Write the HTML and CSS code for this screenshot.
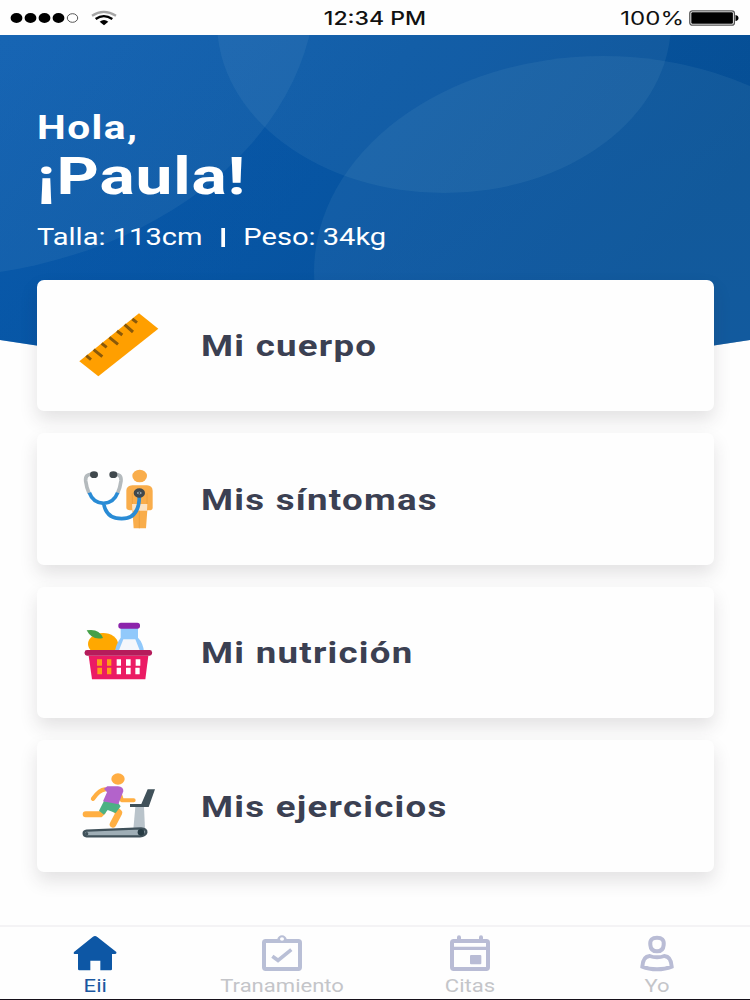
FILE: index.html
```html
<!DOCTYPE html>
<html lang="es">
<head>
<meta charset="utf-8">
<title>Inicio</title>
<link rel="stylesheet" href="styles.css">
</head>
<body>
<div class="screen">
  <header class="status">
    <div class="signal">
      <svg class="dots" viewBox="0 0 70 12"><g fill="#000"><ellipse cx="6.500" cy="6" rx="5.900" ry="4.900"/><ellipse cx="20.500" cy="6" rx="5.900" ry="4.900"/><ellipse cx="34.500" cy="6" rx="5.900" ry="4.900"/><ellipse cx="48.500" cy="6" rx="5.900" ry="4.900"/></g><ellipse cx="62.500" cy="6" rx="5.200" ry="4.300" fill="#fff" stroke="#444" stroke-width=".9"/></svg>
      <svg class="wifi" viewBox="0 0 76 48"><path d="M2 17Q37-6 74 17" fill="none" stroke="#a5a5a5" stroke-width="7"/><path d="M13 27Q37 10 63 27" fill="none" stroke="#000" stroke-width="7"/><path d="M25 35Q38 25 51 35L38 46Z"/></svg>
    </div>
    <span class="clock">12:34 PM</span>
    <div class="power">
      <span class="percent">100%</span>
      <svg class="battery" viewBox="0 0 50 16"><rect x=".8" y=".8" width="44.6" height="14.400" rx="2.5" fill="#fff" stroke="#555" stroke-width="1.3"/><rect x="2.3" y="2.2" width="41.6" height="11.600" rx="1.2"/><path d="M46.5 5Q49.5 5.500 49.500 8T46.500 11Z"/></svg>
    </div>
  </header>

  <section class="hero">
    <svg class="hero-bg" viewBox="0 35 750 340">
      <defs>
        <linearGradient id="sky" x1="0" y1="0" x2="1" y2=".35"><stop offset="0" stop-color="#0b5cb0"/><stop offset=".5" stop-color="#0755a3"/><stop offset="1" stop-color="#064e93"/></linearGradient>
        <linearGradient id="tone" x1="0" y1="0" x2="0" y2="1"><stop offset="0" stop-color="#0753a0" stop-opacity="0"/><stop offset="1" stop-color="#0655a4" stop-opacity=".4"/></linearGradient>
        <clipPath id="edge"><path d="M0 35H750V340Q375 402 0 340Z"/></clipPath>
      </defs>
      <g clip-path="url(#edge)">
        <rect y="35" width="750" height="340" fill="url(#sky)"/>
        <rect y="35" width="750" height="340" fill="url(#tone)"/>
        <g fill="#b4d2e1" fill-opacity=".075">
          <ellipse cx="-79" cy="-18.700" rx="395" ry="296.600"/>
          <ellipse cx="444" cy="22.500" rx="227" ry="170.500"/>
          <ellipse cx="603" cy="272" rx="289" ry="216"/>
        </g>
      </g>
    </svg>
    <div class="greeting">
      <p class="hello">Hola,</p>
      <h1 class="name">¡Paula!</h1>
      <p class="facts"><span>Talla: 113cm</span><i class="bar"></i><span>Peso: 34kg</span></p>
    </div>
  </section>

  <main class="cards">
    <article class="card">
      <svg class="icon" viewBox="0 0 300 270"><path d="M28 184L207 40 265 86 85 229Z" fill="#ff9f00"/><g stroke="#8a5909" stroke-width="9"><path d="M49 167l14 12M71 149l26 21M95 130l15 12M118 112l26 21M141 93l16 12M164 74l25 22M187 57l14 11"/></g></svg>
      <h2>Mi cuerpo</h2>
    </article>
    <article class="card">
      <svg class="icon" viewBox="0 -4 300 270"><g fill="#f9ad4b"><ellipse cx="209" cy="62" rx="22" ry="19"/><path d="M187 90H231Q247 91 248 106V158Q248 165 236 165H232L228 219H191L187 165H180Q169 164 169 157V105Q170 91 187 90Z"/></g><path d="M186 146H232L231 166H187Z" fill="#fbe3c4"/><path d="M187 114V146M231 114V146" stroke="#e99a36" stroke-width="2"/><path d="M208 166V219" stroke="#e99a36" stroke-width="2"/><g fill="none" stroke-width="11"><path d="M68 57Q45 55 47 77Q50 99 57 113M132 57Q155 55 153 77Q150 99 143 113" stroke="#b4babd"/><path d="M58 112Q69 143 101 144Q132 142 143 112M101 144Q108 190 155 190Q208 190 208 122" stroke="#298bd5"/></g><ellipse cx="72" cy="58" rx="12" ry="10" fill="#40484d"/><ellipse cx="130" cy="58" rx="12" ry="10" fill="#40484d"/><ellipse cx="208" cy="113" rx="12" ry="9" fill="#a5b1b7" stroke="#40484d" stroke-width="10"/><circle cx="208" cy="113" r="3" fill="#40484d"/></svg>
      <h2>Mis síntomas</h2>
    </article>
    <article class="card">
      <svg class="icon" viewBox="0 -8 300 270"><ellipse cx="99" cy="103" rx="45" ry="33" fill="#ffa800"/><path d="M50 62Q87 55 99 85Q66 93 50 62Z" fill="#45a049"/><path d="M152 54H204V84Q219 99 222 126H135Q137 105 152 84Z" fill="#91c9fb"/><path d="M160 89H196L210 124H146Z" fill="#f5f7fb"/><rect x="145" y="39" width="65" height="18" rx="8" fill="#8c24ab"/><path d="M56 138H235L226 209H66Z" fill="#eb1b64"/><rect x="44" y="121" width="202" height="17" rx="7" fill="#b51c5b"/><g fill="#ff9d18"><path d="M81 149H96V168H81ZM111 149H124V168H111ZM82 174H96V194H82ZM111 174H124V194H111Z"/></g><path d="M140 149H153V168H140ZM168 149H182V168H168ZM197 149H211V168H197ZM140 174H153V194H140ZM168 174H182V194H168ZM196 174H209V194H196Z" fill="#fff"/></svg>
      <h2>Mi nutrición</h2>
    </article>
    <article class="card">
      <svg class="icon" viewBox="0 2 300 270"><path d="M196 140H222L225 207H190Z" fill="#b9c3ca"/><path d="M233 87H255L236 140H180V131H214Z" fill="#40515a"/><g fill="none" stroke="#ffaf42" stroke-linecap="round" stroke-linejoin="round"><path d="M105 87Q88 88 69 115" stroke-width="13"/><path d="M149 99L156 120H191" stroke-width="12"/><path d="M98 155L91 162H47" stroke-width="18"/><path d="M132 144L147 157 129 192" stroke-width="20"/></g><path d="M102 122L144 127 152 138 137 158 113 149 102 163 87 151Z" fill="#4bb184"/><path d="M112 78H144Q161 80 160 93L145 132 99 123 111 96 102 85Z" fill="#b363cb"/><ellipse cx="144" cy="56" rx="20" ry="17" fill="#ffad43"/><path d="M50 211L213 204Q231 206 229 217Q226 226 210 228H50Q41 227 41 219Q41 212 50 211Z" fill="#9faeb6" stroke="#40515a" stroke-width="7"/><circle cx="213" cy="216" r="10" fill="#273b44"/><circle cx="50" cy="220" r="5" fill="#40515a"/></svg>
      <h2>Mis ejercicios</h2>
    </article>
  </main>

  <nav class="tabs">
    <a class="tab active"><svg class="tab-icon" viewBox="0 0 132 110"><path d="M66 3Q69 3 73 6L130 51Q132 56 127 57H117V103Q117 106 113 106H82V77H52V106H19Q15 106 15 102V57H4Q0 55 3 51L59 6Q63 3 66 3Z" fill="#0d57a5"/></svg><span>Eii</span></a>
    <a class="tab"><svg class="tab-icon" viewBox="0 0 132 110"><g fill="none" stroke="#b9bfd6"><rect x="12" y="18" width="108" height="84" rx="5" stroke-width="12"/><path d="M37 64L54 76 94 44" stroke-width="11"/></g><path d="M46 15H51Q55 1 66 1T81 15H86V24H46Z" fill="#b9bfd6"/><ellipse cx="66" cy="12" rx="6" ry="5" fill="#fff"/></svg><span>Tranamiento</span></a>
    <a class="tab"><svg class="tab-icon" viewBox="0 0 132 110"><g fill="none" stroke="#b9bcd5"><rect x="12" y="18" width="108" height="84" rx="5" stroke-width="12"/><path d="M12 40H120" stroke-width="10"/><path d="M33 7V18M99 7V18" stroke-width="12" stroke-linecap="round"/></g><rect x="66" y="60" width="34" height="28" rx="3" fill="#b9bcd5"/></svg><span>Citas</span></a>
    <a class="tab"><svg class="tab-icon" viewBox="0 0 132 110"><g fill="none" stroke="#b9bcd5" stroke-width="12"><path d="M66 8C80 8 88 15 86 30C85 43 78 49 66 49S47 43 46 30C44 15 52 8 66 8Z"/><path d="M44 63Q54 67 66 67T88 63C103 64 109 76 110 95Q91 103 66 103T22 95C23 76 29 64 44 63Z"/></g></svg><span>Yo</span></a>
  </nav>
</div>
</body>
</html>
```
FILE: styles.css
```css
* { box-sizing: border-box; margin: 0; padding: 0; }
body { font-family: Roboto, "Liberation Sans", sans-serif; background: #fefefe; }
svg { display: block; }

.screen { width: 750px; height: 1000px; display: flex; flex-direction: column; overflow: hidden; }

.status {
  flex: none;
  height: 35px;
  padding: 0 11px 0 10px;
  display: grid;
  grid-template-columns: 1fr auto 1fr;
  align-items: center;
  background: #fefefe;
  color: #111;
}
.signal { display: flex; align-items: center; gap: 11px; }
.dots { width: 70px; height: 12px; }
.wifi { width: 26px; height: 16px; }
.clock { font: 500 18px/35px Inter, sans-serif; transform: scaleX(1.28); }
.power { display: flex; align-items: center; justify-content: flex-end; gap: 5px; }
.percent { padding-top: 1px; font: 400 18.500px/35px Inter, sans-serif; transform: scaleX(1.3); transform-origin: right; }
.battery { width: 50px; height: 16px; }

.hero { flex: none; height: 244.500px; display: grid; color: #fff; }
.hero-bg { grid-area: 1 / 1; width: 750px; height: 340px; }
.greeting { grid-area: 1 / 1; position: relative; padding: 73px 0 0 37px; }
.hello { font-size: 32.500px; font-weight: 700; line-height: 40px; letter-spacing: 1.200px; transform: scaleX(1.250); transform-origin: left; }
.name { margin-top: 2px; font-size: 52px; font-weight: 700; line-height: 54px; letter-spacing: .7px; transform: scaleX(1.265); transform-origin: left; }
.facts { display: flex; align-items: center; margin-top: 16px; font-size: 23.500px; line-height: 34px; width: max-content; transform: scaleX(1.237); transform-origin: left; }
.bar { width: 3px; height: 19px; margin: 0 15px; background: #fff; }

.cards { position: relative; padding: 0 36px 0 37px; display: grid; gap: 22px; }
.card {
  height: 131.600px;
  display: flex;
  align-items: center;
  padding-left: 33px;
  border-radius: 7px;
  background: #fefefe;
  box-shadow: 0 9px 18px rgba(45, 35, 50, .13);
}
.icon { width: 100px; height: 90px; }
.card h2 { margin: 2px 0 0 31px; font-size: 29px; font-weight: 700; line-height: 36px; letter-spacing: 1px; color: #3b4052; white-space: nowrap; transform: scaleX(1.263); transform-origin: left; }

.tabs {
  flex: none;
  margin-top: auto;
  height: 75px;
  padding-left: 1px;
  display: grid;
  grid-template-columns: repeat(4, 187.500px);
  border-top: 2px solid #f4f3f5;
  border-bottom: 1px solid #15101a;
  background: #fefefe;
}
.tab { display: flex; flex-direction: column; align-items: center; padding-top: 8px; color: #c4c5c9; }
.tab.active { color: #1b57a0; }
.tab-icon { width: 44px; height: 36.700px; }
.tab span { margin-top: 4px; font-size: 17.500px; line-height: 20px; transform: scaleX(1.260); }
```
